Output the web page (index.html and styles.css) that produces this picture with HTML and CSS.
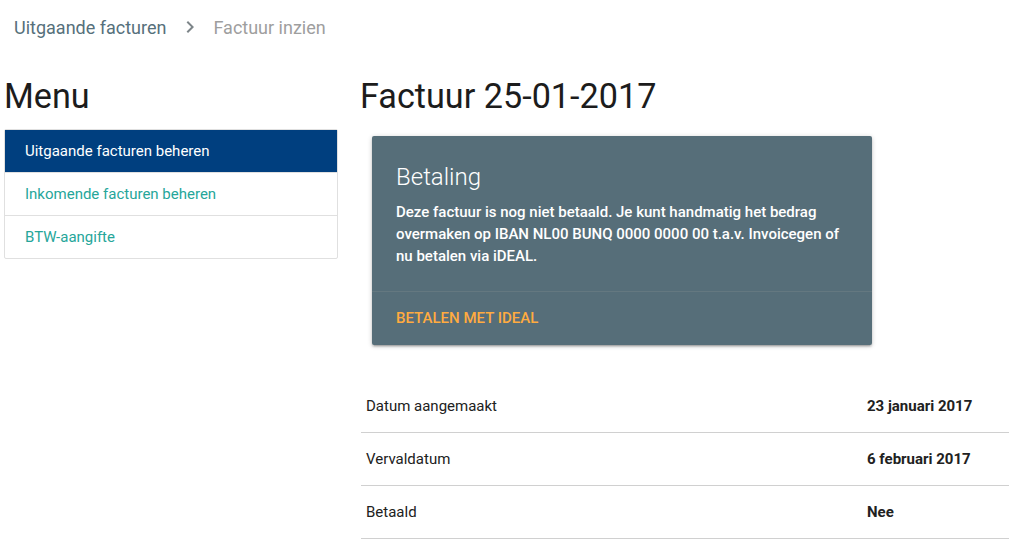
FILE: index.html
```html
<!DOCTYPE html>
<html lang="nl">
<head>
<meta charset="utf-8">
<title>Factuur inzien</title>
<link rel="stylesheet" href="styles.css">
</head>
<body>
<nav class="breadcrumbs">
  <a class="crumb" href="#">Uitgaande facturen</a>
  <svg class="chevron" viewBox="0 0 24 24" width="24" height="24" aria-hidden="true"><path d="M10 6L8.59 7.41 13.17 12l-4.58 4.59L10 18l6-6z"/></svg>
  <span class="crumb current">Factuur inzien</span>
</nav>
<main class="layout">
  <aside class="sidebar">
    <h4 class="page-title menu-title">Menu</h4>
    <div class="collection">
      <a class="collection-item active" href="#">Uitgaande facturen beheren</a>
      <a class="collection-item" href="#">Inkomende facturen beheren</a>
      <a class="collection-item" href="#">BTW-aangifte</a>
    </div>
  </aside>
  <section class="content">
    <h4 class="page-title">Factuur 25-01-2017</h4>
    <div class="card">
      <div class="card-content">
        <span class="card-title">Betaling</span>
        <p>Deze factuur is nog niet betaald. Je kunt handmatig het bedrag overmaken op IBAN NL00 BUNQ 0000 0000 00 t.a.v. Invoicegen of nu betalen via iDEAL.</p>
      </div>
      <div class="card-action">
        <a href="#">Betalen met iDEAL</a>
      </div>
    </div>
    <table class="details">
      <tbody>
        <tr><td class="label">Datum aangemaakt</td><td class="value">23 januari 2017</td></tr>
        <tr><td class="label">Vervaldatum</td><td class="value">6 februari 2017</td></tr>
        <tr><td class="label">Betaald</td><td class="value">Nee</td></tr>
      </tbody>
    </table>
  </section>
</main>
</body>
</html>
```

FILE: styles.css
```css
html, body {
  margin: 0;
  padding: 0;
  background: #ffffff;
}

body {
  font-family: Roboto, "Liberation Sans", sans-serif;
  font-size: 15px;
  line-height: 1.5;
  color: rgba(0, 0, 0, 0.87);
}

a {
  text-decoration: none;
}

.breadcrumbs {
  display: flex;
  align-items: center;
  height: 56px;
  padding-left: 14px;
  font-size: 18px;
  line-height: 56px;
}

.crumb {
  color: #56707b;
}

.crumb.current {
  color: #9e9e9e;
}

.chevron {
  fill: #7d8589;
  margin: 0 11px 0 12px;
  position: relative;
  top: -1px;
}

.layout {
  display: grid;
  grid-template-columns: 334px 648px;
  column-gap: 23px;
  padding-left: 4px;
}

.page-title {
  margin: 21.5px 0 14px -1px;
  font-size: 34.2px;
  font-weight: 400;
  line-height: 37.6px;
  color: #1c1c1c;
}

.menu-title {
  margin-left: 0;
}

.collection {
  display: flex;
  flex-direction: column;
  border: 1px solid #e0e0e0;
  border-radius: 2px;
}

.collection-item {
  display: block;
  padding: 10px 20px;
  line-height: 22px;
  color: #26a69a;
  border-bottom: 1px solid #e0e0e0;
}

.collection-item:last-child {
  border-bottom: none;
}

.collection-item.active {
  background: #003f7f;
  color: #ffffff;
}

.card {
  width: 500px;
  margin: 21px 0 0 11px;
  background: #566e79;
  color: #ffffff;
  border-radius: 2px;
  box-shadow: 0 2px 2px 0 rgba(0, 0, 0, 0.14), 0 3px 1px -2px rgba(0, 0, 0, 0.12), 0 1px 5px 0 rgba(0, 0, 0, 0.2);
}

.card-content {
  padding: 24px;
}

.card-title {
  display: block;
  font-size: 24px;
  font-weight: 300;
  line-height: 32px;
  margin-top: 1px;
  margin-bottom: 8px;
}

.card-content p {
  margin: 0;
  font-weight: 500;
  line-height: 22px;
}

.card-action {
  border-top: 1px solid rgba(160, 160, 160, 0.2);
  padding: 16px 24px;
  line-height: 21px;
}

.card-action a {
  color: #ffab40;
  font-weight: 500;
  text-transform: uppercase;
}

.details {
  width: 100%;
  margin-top: 35px;
  border-collapse: collapse;
}

.details tr {
  border-bottom: 1px solid #d0d0d0;
}

.details td {
  padding: 15px 5px;
  line-height: 22px;
  color: #212121;
}

.details .label {
  width: 491px;
}

.details .value {
  font-weight: 700;
}
```
